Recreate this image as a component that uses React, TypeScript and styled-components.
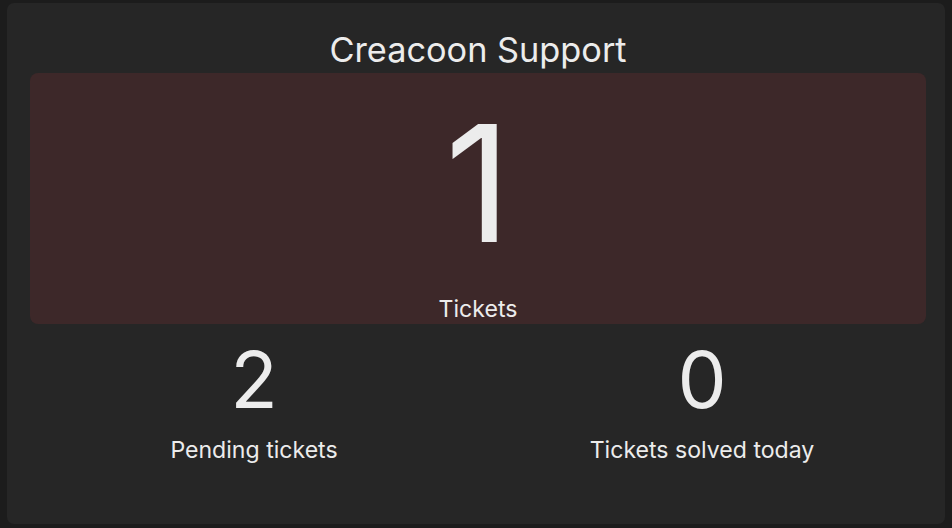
import React from "react";
import styled, { createGlobalStyle } from "styled-components";

const Global = createGlobalStyle`
  html, body { margin: 0; padding: 0; background: #1c1c1c; }
  body { font-family: Inter, "Noto Sans", sans-serif; color: #ececec; }
`;

const Page = styled.div`
  width: 952px;
  height: 528px;
  padding: 3px 0 0 7px;
  box-sizing: border-box;
`;

const Card = styled.div`
  width: 938px;
  height: 521px;
  box-sizing: border-box;
  background: #262626;
  border-radius: 7px;
  padding: 26px 19px 0 23px;
  display: flex;
  flex-direction: column;
`;

const Title = styled.h1`
  margin: 0;
  font-size: 34.3px;
  line-height: 42px;
  font-weight: 400;
  text-align: center;
  color: #ececec;
`;

const Highlight = styled.div`
  margin-top: 2px;
  height: 251px;
  background: #3d2829;
  border-radius: 8px;
  display: flex;
  flex-direction: column;
  align-items: center;
  padding-top: 29px;
  box-sizing: border-box;
`;

const Value = styled.div<{ $size: number }>`
  font-size: ${(p) => p.$size}px;
  line-height: ${(p) => p.$size}px;
  font-weight: 400;
  color: #ececec;
`;

const Label = styled.div<{ $gap: number }>`
  margin-top: ${(p) => p.$gap}px;
  font-size: 23.1px;
  line-height: 28px;
  color: #ececec;
`;

const Row = styled.div`
  display: grid;
  grid-template-columns: 1fr 1fr;
  padding-top: 17px;
`;

const Stat = styled.div`
  display: flex;
  flex-direction: column;
  align-items: center;
`;

export default function App() {
  return (
    <Page>
      <Global />
      <Card>
        <Title>Creacoon Support</Title>
        <Highlight>
          <Value $size={162}>1</Value>
          <Label $gap={31}>Tickets</Label>
        </Highlight>
        <Row>
          <Stat>
            <Value $size={78}>2</Value>
            <Label $gap={17}>Pending tickets</Label>
          </Stat>
          <Stat>
            <Value $size={78}>0</Value>
            <Label $gap={17}>Tickets solved today</Label>
          </Stat>
        </Row>
      </Card>
    </Page>
  );
}
